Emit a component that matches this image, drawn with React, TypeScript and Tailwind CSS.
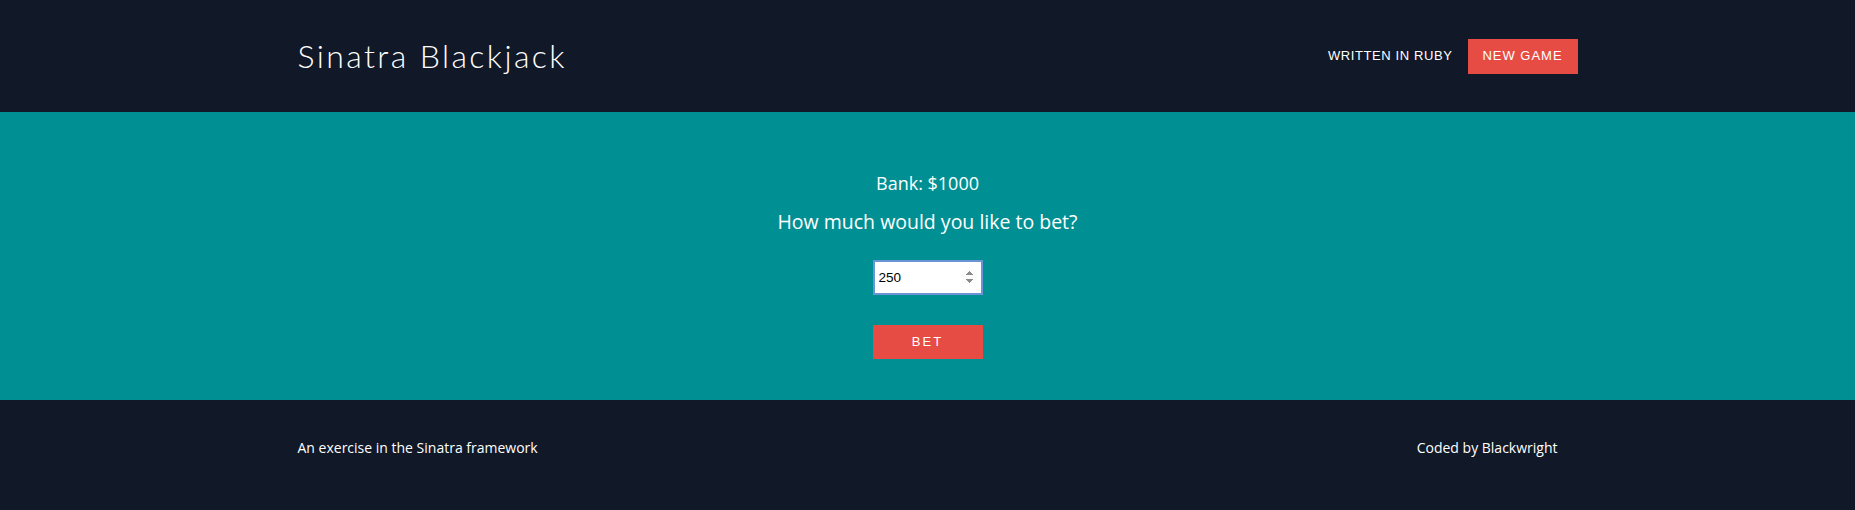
import React, { useState } from 'react';

const App: React.FC = () => {
  const [bet, setBet] = useState('250');

  return (
    <div className="min-h-screen w-full bg-[#111827] font-['Open_Sans',sans-serif] text-white">
      {/* Header */}
      <header className="h-[112px] bg-[#111827]">
        <div className="mx-auto flex h-full w-[1280px] items-center justify-between pl-[10px]">
          <h1 className="font-['Lato',sans-serif] text-[32px] font-light tracking-[2.4px] text-white">Sinatra Blackjack</h1>
          <nav className="-mr-[10px] flex items-center gap-[15px] font-['Liberation_Sans',Arial,sans-serif] text-[13px] tracking-[0.6px]">
            <span className="uppercase text-white">Written in Ruby</span>
            <button className="h-[35px] w-[110px] bg-[#e74c44] tracking-[1px] text-white uppercase">New Game</button>
          </nav>
        </div>
      </header>

      {/* Bet form */}
      <main className="flex h-[288px] flex-col items-center bg-[#009094] pt-[59px]">
        <p className="text-[18px] leading-[24px]">Bank: $1000</p>
        <p className="mt-[14px] text-[19.5px] leading-[26px]">How much would you like to bet?</p>
        <input
          type="number"
          value={bet}
          autoFocus
          onChange={(e) => setBet(e.target.value)}
          className="mt-[25px] h-[35px] w-[110px] border-2 border-[#6b93d6] bg-white px-[4px] font-['Liberation_Sans',Arial,sans-serif] text-[13.5px] text-black outline-none"
        />
        <button className="mt-[30px] h-[34px] w-[110px] bg-[#e74c44] font-['Liberation_Sans',Arial,sans-serif] text-[13px] tracking-[2px] text-white">
          BET
        </button>
      </main>

      {/* Footer */}
      <footer className="h-[110px] bg-[#111827]">
        <div className="mx-auto flex w-[1280px] items-center justify-between px-[10px] pt-[37px] text-[14px]">
          <span>An exercise in the Sinatra framework</span>
          <span>Coded by Blackwright</span>
        </div>
      </footer>
    </div>
  );
};

export default App;
